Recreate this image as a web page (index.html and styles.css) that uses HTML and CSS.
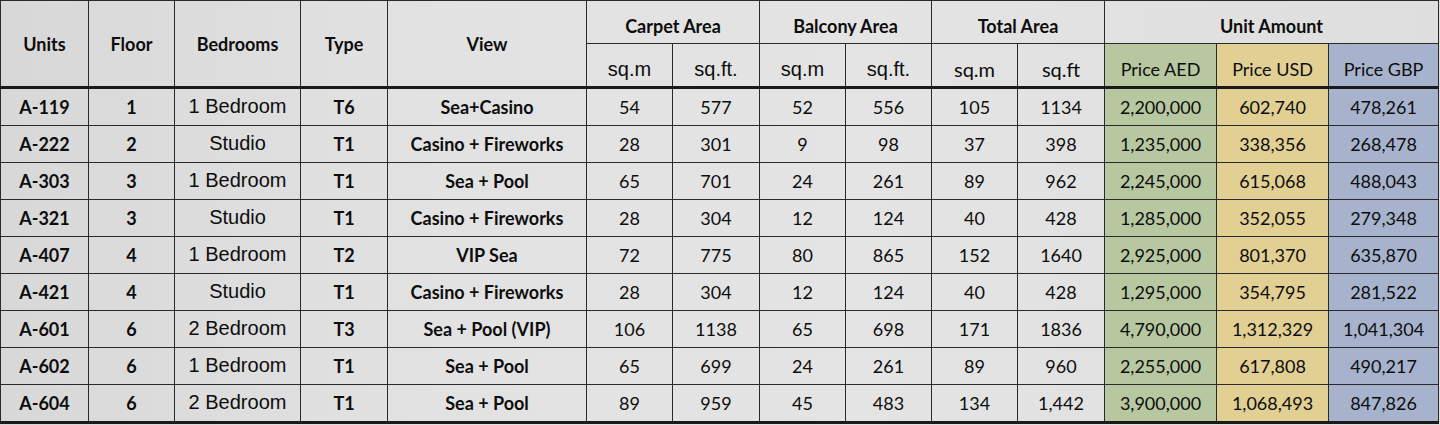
FILE: index.html
```html
<!DOCTYPE html>
<html>
<head>
<meta charset="utf-8">
<link rel="stylesheet" href="styles.css">
</head>
<body>
<table class="units">
  <colgroup>
    <col class="c88"><col class="c86"><col class="c126"><col class="c87"><col class="c199">
    <col class="c86"><col class="c87"><col class="c86"><col class="c86"><col class="c86"><col class="c87">
    <col class="c112"><col class="c112"><col class="c110">
  </colgroup>
  <thead>
    <tr class="h1">
      <th rowspan="2">Units</th>
      <th rowspan="2">Floor</th>
      <th rowspan="2">Bedrooms</th>
      <th rowspan="2">Type</th>
      <th rowspan="2">View</th>
      <th colspan="2">Carpet Area</th>
      <th colspan="2">Balcony Area</th>
      <th colspan="2">Total Area</th>
      <th colspan="3">Unit Amount</th>
    </tr>
    <tr class="h2">
      <th class="ar">sq.m</th><th class="ar">sq.ft.</th>
      <th class="ar">sq.m</th><th class="ar">sq.ft.</th>
      <th class="cal big">sq.m</th><th class="cal big">sq.ft</th>
      <th class="cal aed">Price AED</th><th class="cal usd">Price USD</th><th class="cal gbp">Price GBP</th>
    </tr>
  </thead>
  <tbody>
    <tr><td class="b">A-119</td><td class="b">1</td><td class="ar">1 Bedroom</td><td class="b">T6</td><td class="b">Sea+Casino</td><td>54</td><td>577</td><td>52</td><td>556</td><td>105</td><td>1134</td><td class="aed">2,200,000</td><td class="usd">602,740</td><td class="gbp">478,261</td></tr>
    <tr><td class="b">A-222</td><td class="b">2</td><td class="ar">Studio</td><td class="b">T1</td><td class="b">Casino + Fireworks</td><td>28</td><td>301</td><td>9</td><td>98</td><td>37</td><td>398</td><td class="aed">1,235,000</td><td class="usd">338,356</td><td class="gbp">268,478</td></tr>
    <tr><td class="b">A-303</td><td class="b">3</td><td class="ar">1 Bedroom</td><td class="b">T1</td><td class="b">Sea + Pool</td><td>65</td><td>701</td><td>24</td><td>261</td><td>89</td><td>962</td><td class="aed">2,245,000</td><td class="usd">615,068</td><td class="gbp">488,043</td></tr>
    <tr><td class="b">A-321</td><td class="b">3</td><td class="ar">Studio</td><td class="b">T1</td><td class="b">Casino + Fireworks</td><td>28</td><td>304</td><td>12</td><td>124</td><td>40</td><td>428</td><td class="aed">1,285,000</td><td class="usd">352,055</td><td class="gbp">279,348</td></tr>
    <tr><td class="b">A-407</td><td class="b">4</td><td class="ar">1 Bedroom</td><td class="b">T2</td><td class="b">VIP Sea</td><td>72</td><td>775</td><td>80</td><td>865</td><td>152</td><td>1640</td><td class="aed">2,925,000</td><td class="usd">801,370</td><td class="gbp">635,870</td></tr>
    <tr><td class="b">A-421</td><td class="b">4</td><td class="ar">Studio</td><td class="b">T1</td><td class="b">Casino + Fireworks</td><td>28</td><td>304</td><td>12</td><td>124</td><td>40</td><td>428</td><td class="aed">1,295,000</td><td class="usd">354,795</td><td class="gbp">281,522</td></tr>
    <tr><td class="b">A-601</td><td class="b">6</td><td class="ar">2 Bedroom</td><td class="b">T3</td><td class="b">Sea + Pool (VIP)</td><td>106</td><td>1138</td><td>65</td><td>698</td><td>171</td><td>1836</td><td class="aed">4,790,000</td><td class="usd">1,312,329</td><td class="gbp">1,041,304</td></tr>
    <tr><td class="b">A-602</td><td class="b">6</td><td class="ar">1 Bedroom</td><td class="b">T1</td><td class="b">Sea + Pool</td><td>65</td><td>699</td><td>24</td><td>261</td><td>89</td><td>960</td><td class="aed">2,255,000</td><td class="usd">617,808</td><td class="gbp">490,217</td></tr>
    <tr><td class="b">A-604</td><td class="b">6</td><td class="ar">2 Bedroom</td><td class="b">T1</td><td class="b">Sea + Pool</td><td>89</td><td>959</td><td>45</td><td>483</td><td>134</td><td>1,442</td><td class="aed">3,900,000</td><td class="usd">1,068,493</td><td class="gbp">847,826</td></tr>
  </tbody>
</table>
</body>
</html>
```

FILE: styles.css
```css
html, body {
  margin: 0;
  padding: 0;
  background: #dedede;
}
body {
  width: 1440px;
  height: 425px;
  overflow: hidden;
  background: linear-gradient(90deg, #d8d8d8 0%, #e2e2e2 30%, #e4e4e4 60%, #dedede 100%);
}
.units {
  border-collapse: collapse;
  table-layout: fixed;
  width: 1438px;
  font-family: Lato, "Liberation Sans", sans-serif;
  font-size: 18px;
  color: #0d0d0d;
}
.c88 { width: 88px; }
.c86 { width: 86px; }
.c87 { width: 87px; }
.c126 { width: 126px; }
.c199 { width: 199px; }
.c112 { width: 112px; }
.c110 { width: 110px; }

.units th, .units td {
  border: 1.5px solid #2a2a2a;
  padding: 0;
  text-align: center;
  vertical-align: middle;
  white-space: nowrap;
  overflow: hidden;
}
.units th {
  font-weight: 700;
}
.h1 th { height: 42px; }
.h1 th[colspan] {
  height: 35px;
  padding-top: 7px;
}
.h2 th {
  height: 34px;
  font-weight: 400;
  padding-top: 8px;
  border-bottom: 3px solid #1a1a1a;
}
.h1 th[rowspan] {
  border-bottom: 3px solid #1a1a1a;
}
.units td {
  height: 35px;
  padding-bottom: 1px;
}
.units tbody tr:last-child td { border-bottom: 3px solid #1a1a1a; }

.ar {
  font-family: "Liberation Sans", Arial, sans-serif;
  font-size: 20px;
  font-weight: 400;
}
.cal { font-weight: 400; }
.big { font-size: 20px; }
.b { font-weight: 700; }

.aed { background: #b7c8a1; }
.usd { background: #e1cf93; }
.gbp { background: #a7b3cd; }
```
